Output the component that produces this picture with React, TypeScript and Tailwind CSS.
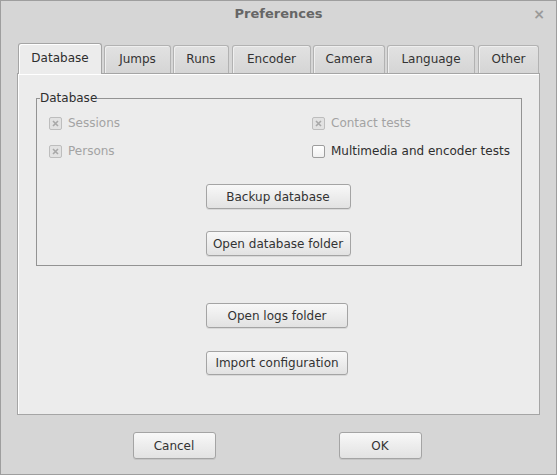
import React from "react";

const font = { fontFamily: '"DejaVu Sans", sans-serif' };

function Btn({ children, className = "" }: { children: React.ReactNode; className?: string }) {
  return (
    <button
      className={
        "flex items-center justify-center rounded-[3px] border border-[#a4a4a4] bg-gradient-to-b from-[#f8f8f8] to-[#e2e2e2] text-[12px] text-[#333333] shadow-[0_1px_0_rgba(0,0,0,0.08)] " +
        className
      }
    >
      {children}
    </button>
  );
}

function Check({ checked, disabled, label }: { checked?: boolean; disabled?: boolean; label: string }) {
  return (
    <div className="flex items-center h-[16px]">
      <div
        className={
          "w-[13px] h-[13px] rounded-[2px] border flex items-center justify-center " +
          (disabled
            ? "border-[#bdbdbd] bg-[#e2e2e2]"
            : "border-[#9d9d9d] bg-gradient-to-b from-[#ffffff] to-[#f0f0f0]")
        }
      >
        {checked && (
          <svg width="7" height="7" viewBox="0 0 7 7">
            <path d="M1 1 L6 6 M6 1 L1 6" stroke="#a8a8a8" strokeWidth="1.6" />
          </svg>
        )}
      </div>
      <span className={"ml-[6px] text-[12px] " + (disabled ? "text-[#a3a3a3]" : "text-[#2e2e2e]")}>{label}</span>
    </div>
  );
}

const tabs: { name: string; w: number; ml: number }[] = [
  { name: "Jumps", w: 67, ml: 2 },
  { name: "Runs", w: 56, ml: 2 },
  { name: "Encoder", w: 79, ml: 3 },
  { name: "Camera", w: 72, ml: 2 },
  { name: "Language", w: 88, ml: 2 },
  { name: "Other", w: 61, ml: 3 },
];

export default function App() {
  return (
    <div
      style={font}
      className="w-[557px] h-[475px] bg-[#d6d6d6] border border-[#9e9e9e] flex flex-col text-[#2e2e2e] overflow-hidden"
    >
      <div className="relative h-[41px] flex justify-center">
        <div className="mt-[5px] text-[13px] font-bold text-[#666666] leading-[16px]">Preferences</div>
        <div className="absolute right-[11px] top-[5px] text-[14px] font-bold text-[#9a9a9a] leading-[16px]">×</div>
      </div>
      <div className="px-[16px]">
        <div className="flex items-end h-[31px] pl-[1px]">
          <div className="relative z-10 -mb-px w-[84px] h-[31px] rounded-t-[3px] border border-b-0 border-[#a5a5a5] bg-[#ececec] shadow-[inset_1px_1px_0_#ffffff] flex items-center justify-center text-[12px] text-[#2e2e2e] pb-[3px]">
            Database
          </div>
          {tabs.map((t) => (
            <div
              key={t.name}
              style={{ width: t.w, marginLeft: t.ml }}
              className="h-[28px] rounded-t-[3px] border border-b-0 border-[#b2b2b2] bg-gradient-to-b from-[#e2e2e2] to-[#d5d5d5] shadow-[inset_1px_1px_0_#efefef] flex items-center justify-center text-[12px] text-[#333333] pb-[1px]"
            >
              {t.name}
            </div>
          ))}
        </div>
        <div className="h-[342px] border border-[#a5a5a5] bg-[#ececec] shadow-[inset_1px_1px_0_#ffffff] flex flex-col">
          <fieldset className="mt-[17px] ml-[18px] mr-[17px] h-[175px] border border-[#939393] px-0 pb-0">
            <legend className="ml-[3px] px-0 text-[12px] text-[#2e2e2e] leading-[15px]">Database</legend>
            <div className="grid grid-cols-[263px_1fr] ml-[12px] mt-[9px] gap-y-[12px]">
              <Check checked disabled label="Sessions" />
              <Check checked disabled label="Contact tests" />
              <Check checked disabled label="Persons" />
              <Check label="Multimedia and encoder tests" />
            </div>
            <div className="flex flex-col items-center mt-[25px] pr-[2px] gap-[22px]">
              <Btn className="w-[145px] h-[25px]">Backup database</Btn>
              <Btn className="w-[145px] h-[25px]">Open database folder</Btn>
            </div>
          </fieldset>
          <div className="flex flex-col items-center mt-[37px] pr-[3px] gap-[23px]">
            <Btn className="w-[142px] h-[25px]">Open logs folder</Btn>
            <Btn className="w-[142px] h-[24px]">Import configuration</Btn>
          </div>
        </div>
        <div className="flex justify-center gap-[123px] mt-[17px] pr-[3px]">
          <Btn className="w-[83px] h-[27px]">Cancel</Btn>
          <Btn className="w-[83px] h-[27px]">OK</Btn>
        </div>
      </div>
    </div>
  );
}
